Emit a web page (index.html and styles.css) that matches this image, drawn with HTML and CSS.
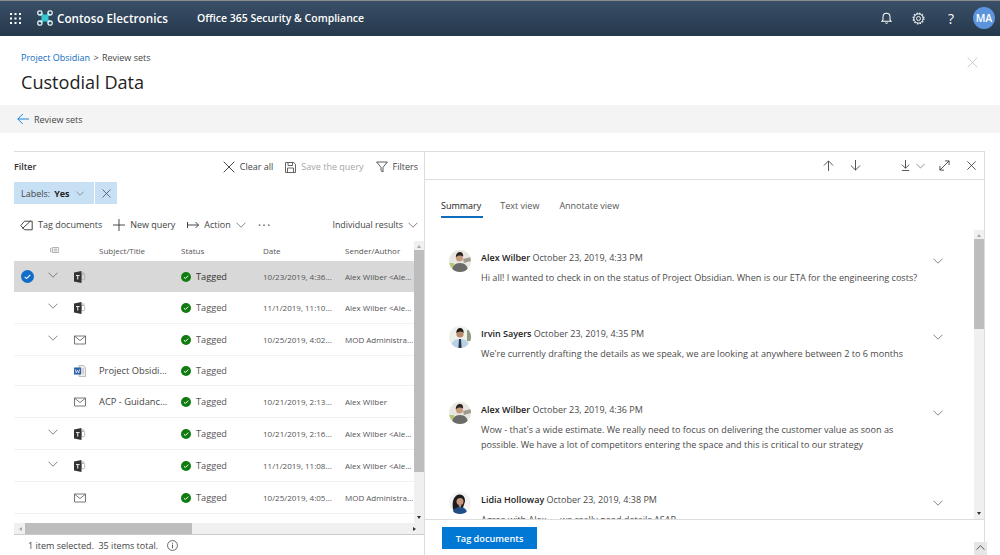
FILE: index.html
```html
<!DOCTYPE html>
<html lang="en">
<head>
  <meta charset="UTF-8">
  <title>Custodial Data</title>
  <link rel="stylesheet" href="styles.css">
</head>
<body>
  <svg class="sprites" width="0" height="0">
    <defs>
      <symbol id="i-chev" viewBox="0 0 10 6"><path d="M.5.7 5 5.2 9.5.7" fill="none" stroke="currentColor" stroke-width=".8"/></symbol>
      <symbol id="i-x" viewBox="0 0 12 12"><path d="M.7.7l10.6 10.6M11.3.7.7 11.3" fill="none" stroke="currentColor" stroke-width="1"/></symbol>
      <symbol id="i-teams" viewBox="0 0 12 12">
        <path d="M7.5 3.5h2.2a1 1 0 0 1 1 1v3.2a1 1 0 0 1-1 1H7.5z" fill="none" stroke="#a8a8a8" stroke-width=".8"/>
        <circle cx="9" cy="2.6" r="1" fill="none" stroke="#a8a8a8" stroke-width=".7"/>
        <path d="M0 1.6 7.5 0v12L0 10.4z" fill="#333"/>
        <path d="M2 4h3.6v1H4.3v3.6H3.2V5H2z" fill="#e8e8e8"/>
      </symbol>
      <symbol id="i-mail" viewBox="0 0 12 10"><path d="M.5 1h11v8H.5zM.7 1.2 6 5.6l5.300-4.400" fill="none" stroke="#555" stroke-width=".8"/></symbol>
      <symbol id="i-word" viewBox="0 0 12 12">
        <path d="M5 .5h4.500l2 2v9H5z" fill="#ececec" stroke="#a6a6a6" stroke-width=".7"/>
        <path d="M7 4h3M7 6h3M7 8h3" stroke="#a6a6a6" stroke-width=".7"/>
        <rect y="2.5" width="7" height="7" fill="#2b5fa8"/>
        <path d="M1.2 4.2 2.3 8l1.2-2.8L4.7 8l1-3.8" fill="none" stroke="#fff" stroke-width=".7"/>
      </symbol>
      <symbol id="i-ok" viewBox="0 0 11 11"><circle cx="5.5" cy="5.5" r="5.5" fill="#107c10"/><path d="M3.2 5.7 4.8 7.200 7.900 4" fill="none" stroke="#fff" stroke-width="1.100"/></symbol>
      <clipPath id="round"><circle cx="11" cy="11" r="11"/></clipPath>
      <symbol id="a-alex" viewBox="0 0 22 22">
        <g clip-path="url(#round)">
          <rect width="22" height="22" fill="#e8e8e0"/>
          <rect y="13" width="5" height="9" fill="#b9c47c"/>
          <path d="M14 9l8-2v4l-7 2z" fill="#a09a8c"/>
          <path d="M3 22c0-6 3-9 8-9s8 3 8 9z" fill="#6a6a68"/>
          <circle cx="10.5" cy="8" r="3.5" fill="#c99b7e"/>
          <path d="M6.800 7.500c0-4 1.800-5.500 4.200-5.500s3.400 2 3.100 4.500C12 5 9 5 6.800 7.500z" fill="#2c241f"/>
        </g>
      </symbol>
      <symbol id="a-irvin" viewBox="0 0 22 22">
        <g clip-path="url(#round)">
          <rect width="22" height="22" fill="#eef0ea"/>
          <rect x="18" y="4" width="4" height="11" fill="#8e9a80"/>
          <path d="M2 22c0-6 3-9 9-9s9 3 9 9z" fill="#b7d2e6"/>
          <circle cx="11" cy="8" r="3.600" fill="#b98a6c"/>
          <path d="M7.300 7c0-3.500 1.800-5 3.800-5s3.700 1.500 3.600 5c-2-2-5-2-7.400 0z" fill="#1f1a18"/>
          <path d="M10 13h2l.6 9H9.400z" fill="#2a3344"/>
        </g>
      </symbol>
      <symbol id="a-lidia" viewBox="0 0 22 22">
        <g clip-path="url(#round)">
          <rect width="22" height="22" fill="#f2f2f0"/>
          <path d="M5 20C2.500 14 3 4 10 2.500c5-.5 6 4 6 7l-3 9z" fill="#1c1a1c"/>
          <path d="M4 22c0-5 3-7 7-7s7 2 7 7z" fill="#1f4e86"/>
          <circle cx="11" cy="9.500" r="3.500" fill="#c9977c"/>
          <path d="M9.500 13h3l-1.500 3z" fill="#c9977c"/>
        </g>
      </symbol>
    </defs>
  </svg>

  <header class="topbar">
    <svg class="waffle" viewBox="0 0 11 11" width="11" height="11">
      <g fill="#fff">
        <rect width="2" height="2"/><rect x="4.5" width="2" height="2"/><rect x="9" width="2" height="2"/>
        <rect y="4.5" width="2" height="2"/><rect x="4.5" y="4.5" width="2" height="2"/><rect x="9" y="4.5" width="2" height="2"/>
        <rect y="9" width="2" height="2"/><rect x="4.5" y="9" width="2" height="2"/><rect x="9" y="9" width="2" height="2"/>
      </g>
    </svg>
    <svg class="logo" viewBox="0 0 16 16" width="16" height="16">
      <path d="M4 8 8 4l4 4-4 4z" fill="#39c6cf"/>
      <path d="M3.500 3.500l9 9M12.500 3.500l-9 9" stroke="#39c6cf" stroke-width="3"/>
      <g fill="none" stroke="#e8f6f7" stroke-width="1.300">
        <rect x=".8" y=".8" width="4.200" height="4.200" rx="1.800"/><rect x="11" y=".8" width="4.200" height="4.200" rx="1.800"/>
        <rect x=".8" y="11" width="4.200" height="4.200" rx="1.800"/><rect x="11" y="11" width="4.200" height="4.200" rx="1.800"/>
      </g>
    </svg>
    <span class="brand">Contoso Electronics</span>
    <span class="product">Office 365 Security &amp; Compliance</span>
    <div class="top-actions">
      <svg viewBox="0 0 12 13" width="11" height="12"><path d="M1 10h10L9.800 8.500V5a3.800 3.800 0 0 0-7.600 0v3.500zM4.800 11.500a1.300 1.300 0 0 0 2.400 0" fill="none" stroke="#fff" stroke-width="1.100"/></svg>
      <svg viewBox="0 0 13 13" width="13" height="13"><circle cx="6.5" cy="6.5" r="2" fill="none" stroke="#fff" stroke-width=".9"/><circle cx="6.5" cy="6.5" r="4.600" fill="none" stroke="#fff" stroke-width="1"/><circle cx="6.5" cy="6.5" r="5.400" fill="none" stroke="#fff" stroke-width="1.200" stroke-dasharray="1.400 1.430"/></svg>
      <span class="help">?</span>
      <span class="me">MA</span>
    </div>
  </header>

  <section class="title-block">
    <div>
      <div class="crumbs"><a>Project Obsidian</a> <i>&gt;</i> Review sets</div>
      <h1>Custodial Data</h1>
    </div>
    <svg class="title-close"><use href="#i-x"/></svg>
  </section>

  <div class="backbar">
    <svg viewBox="0 0 12 12" width="12" height="12"><path d="M12 6H.8M5.800 1 .8 6l5 5" fill="none" stroke="#0078d4" stroke-width=".9"/></svg>
    <span>Review sets</span>
  </div>

  <main class="panels">
    <section class="left">
      <div class="filter-head">
        <strong>Filter</strong>
        <div class="filter-actions">
          <span class="act"><svg class="ic-lg"><use href="#i-x"/></svg>Clear all</span>
          <span class="act off"><svg viewBox="0 0 11 11" width="11" height="11"><path d="M.5.5h8.300l1.700 1.700v8.300H.5zM3 .5v3h4.500v-3M2.500 10.500v-4.500h6v4.500" fill="none" stroke="#555" stroke-width=".9"/></svg>Save the query</span>
          <span class="act"><svg viewBox="0 0 12 12" width="12" height="12"><path d="M.6 1h10.800L7 6.300v4.700L5 9.600V6.300z" fill="none" stroke="#333" stroke-width=".8"/></svg>Filters</span>
        </div>
      </div>

      <div class="chip">
        <span class="chip-main">Labels: <b>Yes</b> <svg class="chev"><use href="#i-chev"/></svg></span>
        <span class="chip-x"><svg><use href="#i-x"/></svg></span>
      </div>

      <div class="toolbar">
        <span class="act"><svg viewBox="0 0 13 11" width="13" height="11"><path d="M.8 5.500 4.500 1.200h7.700v8.600H4.500zM2.500 8.500 10.500 1" fill="none" stroke="#333" stroke-width=".9"/></svg>Tag documents</span>
        <span class="act new-query"><svg viewBox="0 0 12 12" width="12" height="12"><path d="M6 0v12M0 6h12" stroke="#333" stroke-width=".9"/></svg>New query</span>
        <span class="act"><svg viewBox="0 0 12 8" width="12" height="8"><path d="M.5 1v6M.5 4h11M8.500 1l3 3-3 3" fill="none" stroke="#333" stroke-width=".9"/></svg>Action <svg class="chev"><use href="#i-chev"/></svg></span>
        <span class="dots">&middot;&middot;&middot;</span>
        <span class="act results">Individual results <svg class="chev"><use href="#i-chev"/></svg></span>
      </div>

      <div class="list-wrap">
        <div class="list">
          <div class="row head">
            <span></span>
            <span class="type-h"><svg viewBox="0 0 10 7" width="9" height="6"><path d="M2.500.5h7v6h-7zM4 2.500h4M4 4.500h4M.5 1v5" fill="none" stroke="#777" stroke-width=".7"/></svg></span>
            <span></span>
            <span>Subject/Title</span><span>Status</span><span>Date</span><span>Sender/Author</span>
          </div>

          <div class="row selected">
            <span class="check"><svg viewBox="0 0 13 13" width="13" height="13"><circle cx="6.5" cy="6.5" r="6.5" fill="#0f6cc9"/><path d="M3.700 6.800 5.600 8.600 9.300 4.800" fill="none" stroke="#fff" stroke-width="1.100"/></svg></span>
            <svg class="chev"><use href="#i-chev"/></svg>
            <svg class="type"><use href="#i-teams"/></svg>
            <span></span>
            <span class="status"><svg class="ok"><use href="#i-ok"/></svg>Tagged</span>
            <span class="sm">10/23/2019, 4:36...</span><span class="sm">Alex Wilber &lt;Ale...</span>
          </div>
          <div class="row">
            <span></span><svg class="chev"><use href="#i-chev"/></svg>
            <svg class="type"><use href="#i-teams"/></svg>
            <span></span>
            <span class="status"><svg class="ok"><use href="#i-ok"/></svg>Tagged</span>
            <span class="sm">11/1/2019, 11:10...</span><span class="sm">Alex Wilber &lt;Ale...</span>
          </div>
          <div class="row">
            <span></span><svg class="chev"><use href="#i-chev"/></svg>
            <svg class="type mail"><use href="#i-mail"/></svg>
            <span></span>
            <span class="status"><svg class="ok"><use href="#i-ok"/></svg>Tagged</span>
            <span class="sm">10/25/2019, 4:02...</span><span class="sm">MOD Administra...</span>
          </div>
          <div class="row short">
            <span></span><span></span>
            <svg class="type"><use href="#i-word"/></svg>
            <span class="subj">Project Obsidi...</span>
            <span class="status"><svg class="ok"><use href="#i-ok"/></svg>Tagged</span>
            <span></span><span></span>
          </div>
          <div class="row">
            <span></span><span></span>
            <svg class="type mail"><use href="#i-mail"/></svg>
            <span class="subj">ACP - Guidanc...</span>
            <span class="status"><svg class="ok"><use href="#i-ok"/></svg>Tagged</span>
            <span class="sm">10/21/2019, 2:13...</span><span class="sm">Alex Wilber</span>
          </div>
          <div class="row">
            <span></span><svg class="chev"><use href="#i-chev"/></svg>
            <svg class="type"><use href="#i-teams"/></svg>
            <span></span>
            <span class="status"><svg class="ok"><use href="#i-ok"/></svg>Tagged</span>
            <span class="sm">10/21/2019, 2:16...</span><span class="sm">Alex Wilber &lt;Ale...</span>
          </div>
          <div class="row">
            <span></span><svg class="chev"><use href="#i-chev"/></svg>
            <svg class="type"><use href="#i-teams"/></svg>
            <span></span>
            <span class="status"><svg class="ok"><use href="#i-ok"/></svg>Tagged</span>
            <span class="sm">11/1/2019, 11:08...</span><span class="sm">Alex Wilber &lt;Ale...</span>
          </div>
          <div class="row">
            <span></span><span></span>
            <svg class="type mail"><use href="#i-mail"/></svg>
            <span></span>
            <span class="status"><svg class="ok"><use href="#i-ok"/></svg>Tagged</span>
            <span class="sm">10/25/2019, 4:05...</span><span class="sm">MOD Administra...</span>
          </div>
        </div>
        <div class="vscroll list-scroll"><i class="up"></i><b></b><i class="down"></i></div>
      </div>

      <div class="hscroll"><i class="lt"></i><b></b><i class="rt"></i></div>
      <div class="status-line">1 item selected.&nbsp; 35 items total.
        <svg viewBox="0 0 12 12" width="11" height="11"><circle cx="6" cy="6" r="5.400" fill="none" stroke="#333" stroke-width=".8"/><path d="M6 5v4M6 3v1" stroke="#333" stroke-width=".9"/></svg>
      </div>
    </section>

    <section class="right">
      <div class="nav-bar">
        <svg class="nav" viewBox="0 0 12 12"><path d="M6 12V1M1 6l5-5 5 5" fill="none" stroke="#333" stroke-width=".9"/></svg>
        <svg class="nav" viewBox="0 0 12 12"><path d="M6 0v11M1 6l5 5 5-5" fill="none" stroke="#333" stroke-width=".9"/></svg>
        <svg class="nav dl" viewBox="0 0 12 12"><path d="M6 0v9M2 5l4 4 4-4M2 11.500h8" fill="none" stroke="#333" stroke-width=".9"/></svg>
        <svg class="chev"><use href="#i-chev"/></svg>
        <svg class="nav" viewBox="0 0 12 12"><path d="M1 11 11 1M6.500 1H11v4.500M1 6.500V11h4.500" fill="none" stroke="#333" stroke-width=".9"/></svg>
        <svg class="nav" viewBox="0 0 12 12"><path d="M1.500 1.500l9 9M10.500 1.500l-9 9" fill="none" stroke="#333" stroke-width=".9"/></svg>
      </div>

      <nav class="tabs">
        <a class="on">Summary</a><a>Text view</a><a class="last">Annotate view</a>
      </nav>

      <div class="thread-wrap">
        <div class="thread">
          <article class="msg msg-1">
            <svg class="avatar"><use href="#a-alex"/></svg>
            <div class="body">
              <p class="who"><b>Alex Wilber</b> October 23, 2019, 4:33 PM</p>
              <p>Hi all! I wanted to check in on the status of Project Obsidian. When is our ETA for the engineering costs?</p>
            </div>
            <svg class="chev"><use href="#i-chev"/></svg>
          </article>
          <article class="msg msg-2">
            <svg class="avatar"><use href="#a-irvin"/></svg>
            <div class="body">
              <p class="who"><b>Irvin Sayers</b> October 23, 2019, 4:35 PM</p>
              <p>We're currently drafting the details as we speak, we are looking at anywhere between 2 to 6 months</p>
            </div>
            <svg class="chev"><use href="#i-chev"/></svg>
          </article>
          <article class="msg msg-3">
            <svg class="avatar"><use href="#a-alex"/></svg>
            <div class="body">
              <p class="who"><b>Alex Wilber</b> October 23, 2019, 4:36 PM</p>
              <p>Wow - that's a wide estimate. We really need to focus on delivering the customer value as soon as possible. We have a lot of competitors entering the space and this is critical to our strategy</p>
            </div>
            <svg class="chev"><use href="#i-chev"/></svg>
          </article>
          <article class="msg">
            <svg class="avatar"><use href="#a-lidia"/></svg>
            <div class="body">
              <p class="who"><b>Lidia Holloway</b> October 23, 2019, 4:38 PM</p>
              <p>Agree with Alex &mdash; we really need details ASAP</p>
            </div>
            <svg class="chev"><use href="#i-chev"/></svg>
          </article>
        </div>
        <div class="vscroll thread-scroll"><i class="up"></i><b></b><i class="down"></i></div>
      </div>

      <div class="footer-bar">
        <button class="primary">Tag documents</button>
      </div>
    </section>
  </main>

  <div class="corner"><svg viewBox="0 0 10 6"><path d="M.5 5.300 5 .8l4.500 4.500" fill="none" stroke="#333" stroke-width=".9"/></svg></div>
</body>
</html>
```

FILE: styles.css
```css
* {
  box-sizing: border-box;
}

html, body {
  height: 100%;
}

body {
  margin: 0;
  height: 555px;
  overflow: hidden;
  display: flex;
  flex-direction: column;
  font-family: "Open Sans", "Noto Sans", Arial, sans-serif;
  font-size: 9px;
  color: #333;
  background-color: #fff;
}

svg {
  display: block;
  flex: none;
}

p {
  margin: 0;
}

.sprites {
  position: absolute;
}

/* Top bar */
.topbar {
  height: 36px;
  flex: none;
  display: flex;
  align-items: center;
  padding: 0 0 1px 10px;
  color: #fff;
  border-top: 1px solid #8b8f92;
  background: linear-gradient(#3a5068, #25384b);
}

.logo {
  margin-left: 16px;
}

.brand {
  margin-left: 4px;
  font-size: 11.7px;
  font-weight: 600;
}

.product {
  margin-left: 29px;
  font-size: 10.5px;
  font-weight: 600;
}

.top-actions {
  margin-left: auto;
  display: flex;
  align-items: center;
}

.top-actions svg {
  margin-right: 20px;
}

.help {
  font-size: 14px;
  width: 12px;
  margin-right: 16px;
  text-align: center;
}

.me {
  width: 22px;
  height: 22px;
  margin-right: 5px;
  border-radius: 50%;
  background-color: #5b93dc;
  font-size: 10.5px;
  font-weight: 600;
  line-height: 22px;
  text-align: center;
}

/* Title */
.title-block {
  height: 69px;
  flex: none;
  display: flex;
  justify-content: space-between;
  padding: 15px 22px 0 21px;
}

.crumbs {
  font-size: 9px;
  line-height: 13px;
  color: #444;
}

.crumbs a {
  color: #0f6cbd;
}

.crumbs i {
  font-style: normal;
  margin: 0 1px;
}

h1 {
  margin: 5px 0 0;
  font-size: 18.1px;
  font-weight: 400;
  line-height: 26px;
  color: #222;
}

.title-close {
  width: 11px;
  height: 11px;
  margin-top: 6px;
  color: #c8c8c8;
}

.backbar {
  height: 28px;
  flex: none;
  display: flex;
  align-items: center;
  gap: 5px;
  padding-left: 17px;
  background-color: #f4f4f4;
  font-size: 9px;
  color: #444;
}

/* Panels */
.panels {
  flex: 1;
  min-height: 0;
  display: flex;
  margin: 18px 15px 0 14px;
  border-top: 1px solid #ddd;
}

.left {
  width: 411px;
  flex: none;
  display: flex;
  flex-direction: column;
  border-right: 1px solid #ddd;
}

.filter-head {
  height: 30px;
  flex: none;
  display: flex;
  justify-content: space-between;
  padding: 9px 6px 0 0;
}

.filter-head strong {
  font-weight: 600;
  font-size: 9px;
  line-height: 14px;
  margin-top: -1px;
}

.filter-actions {
  display: flex;
  align-items: flex-start;
  gap: 12px;
}

.act {
  display: inline-flex;
  align-items: center;
  gap: 5px;
  font-size: 9px;
  line-height: 12px;
  color: #444;
  white-space: nowrap;
}

.act.off {
  color: #a6a6a6;
}

.ic-lg {
  width: 12px;
  height: 12px;
}

.chev {
  width: 10px;
  height: 6px;
  color: #666;
}

.chip {
  display: flex;
  gap: 1px;
  height: 22px;
  flex: none;
  font-size: 9px;
}

.chip-main {
  width: 80px;
  display: flex;
  align-items: center;
  gap: 4px;
  padding-left: 7px;
  background-color: #c7e0f4;
  color: #444;
}

.chip-main b {
  font-weight: 700;
  color: #222;
  margin-right: 2px;
}

.chip-main .chev {
  width: 8px;
  height: 5px;
}

.chip-x {
  width: 22px;
  display: flex;
  align-items: center;
  justify-content: center;
  background-color: #c7e0f4;
}

.chip-x svg {
  width: 9px;
  height: 9px;
  color: #444;
}

.toolbar {
  height: 37px;
  flex: none;
  display: flex;
  align-items: center;
  gap: 12px;
  padding: 5px 6px 0 6px;
}

.new-query {
  margin-left: -1px;
  letter-spacing: -.05px;
}

.dots {
  font-size: 13px;
  letter-spacing: 1.2px;
  color: #666;
}

.results {
  margin-left: auto;
  font-size: 8.9px;
}

/* Results list */
.list-wrap {
  height: 282px;
  flex: none;
  display: flex;
}

.list {
  flex: 1;
  min-width: 0;
}

.row {
  height: 32px;
  display: grid;
  grid-template-columns: 26px 26px 33px 82px 82px 82px 68px;
  align-items: center;
  border-bottom: 1px solid #f2f2f2;
  font-size: 9px;
  white-space: nowrap;
  overflow: hidden;
}

.row.head {
  height: 20px;
  padding-bottom: 2px;
  border-bottom: none;
  font-size: 8px;
  color: #555;
}

.row.selected {
  height: 31px;
  background-color: #d8d8d8;
  border-bottom: none;
}

.row.short {
  height: 30px;
}

.row > .chev {
  margin-left: 8px;
  margin-top: -3px;
}

.check {
  padding-left: 7px;
}

.type-h {
  padding-left: 10px;
}

.type {
  width: 12px;
  height: 12px;
  margin-left: 8px;
}

.type.mail {
  height: 10px;
}

.subj {
  font-size: 9.3px;
  color: #444;
}

.status {
  display: flex;
  align-items: center;
  gap: 5px;
  font-size: 9.2px;
  color: #555;
}

.selected .status {
  color: #333;
}

.ok {
  width: 10px;
  height: 10px;
}

.sm {
  font-size: 8px;
  color: #555;
  overflow: hidden;
}

/* Scrollbars */
.vscroll {
  width: 10px;
  flex: none;
  display: flex;
  flex-direction: column;
  background-color: #f0f0f0;
}

.vscroll b {
  display: block;
  background-color: #bdbdbd;
}

.vscroll i {
  display: block;
  margin-left: auto;
  margin-right: auto;
  border-left: 2.5px solid transparent;
  border-right: 2.5px solid transparent;
}

.vscroll .up {
  margin-top: 4px;
  margin-bottom: 2px;
  border-bottom: 3px solid #a6a6a6;
}

.vscroll .down {
  margin-top: auto;
  margin-bottom: 4px;
  border-top: 3px solid #333;
}

.list-scroll b {
  height: 222px;
}

.thread-scroll b {
  height: 90px;
}

.hscroll {
  height: 11px;
  flex: none;
  display: flex;
  align-items: center;
  padding-right: 11px;
  background-color: #f0f0f0;
  box-shadow: 0 1px 0 #ccc;
}

.hscroll b {
  width: 167px;
  height: 11px;
  background-color: #bdbdbd;
}

.hscroll i {
  display: block;
  border-top: 2.5px solid transparent;
  border-bottom: 2.5px solid transparent;
}

.hscroll .lt {
  margin: 0 3px 0 5px;
  border-right: 3px solid #a6a6a6;
}

.hscroll .rt {
  margin-left: auto;
  margin-right: -3px;
  border-left: 3px solid #333;
}

.status-line {
  flex: 1;
  display: flex;
  align-items: center;
  gap: 9px;
  padding: 2px 0 0 14px;
  font-size: 9px;
  color: #444;
}

/* Right panel */
.right {
  flex: 1;
  min-width: 0;
  display: flex;
  flex-direction: column;
  border-right: 1px solid #ddd;
}

.nav-bar {
  height: 28px;
  flex: none;
  display: flex;
  align-items: center;
  justify-content: flex-end;
  padding-right: 7px;
  border-bottom: 1px solid #ddd;
}

.nav {
  width: 11px;
  height: 11px;
  margin-left: 16px;
}

.nav.dl {
  margin-left: 39px;
}

.nav-bar .chev {
  margin-left: 5px;
  margin-right: -2px;
  width: 9px;
}

.tabs {
  height: 50px;
  flex: none;
  display: flex;
  gap: 19px;
  padding: 10px 0 0 16px;
}

.tabs a {
  height: 28px;
  padding-top: 9px;
  font-size: 9px;
  color: #555;
}

.tabs .on {
  color: #222;
  font-weight: 500;
  padding-right: 2px;
  margin-right: -2px;
  border-bottom: 2px solid #0f6cbd;
}

.tabs .last {
  margin-left: 1px;
}

.thread-wrap {
  height: 290px;
  flex: none;
  display: flex;
  overflow: hidden;
  border-bottom: 1px solid #ddd;
}

.thread {
  flex: 1;
  min-width: 0;
  overflow: hidden;
  padding: 20px 0 0 24px;
}

.msg {
  display: flex;
  align-items: flex-start;
  padding-right: 31px;
  font-size: 9.1px;
  line-height: 15px;
}

.msg-1, .msg-2 {
  height: 76px;
}

.msg-3 {
  height: 90px;
}

.avatar {
  width: 22px;
  height: 22px;
}

.body {
  flex: 1;
  min-width: 0;
  padding-left: 10px;
  color: #4a4a4a;
}

.who {
  margin-bottom: 5px;
  font-size: 9px;
}

.who b {
  font-weight: 600;
  color: #222;
}

.msg > .chev {
  margin-left: 9px;
  margin-top: 8px;
}

.footer-bar {
  flex: 1;
  padding: 7px 0 0 17px;
}

.primary {
  display: block;
  width: 95px;
  height: 22px;
  border: none;
  padding: 0;
  background-color: #0078d4;
  color: #fff;
  font-family: inherit;
  font-size: 9.2px;
  font-weight: 600;
}

.corner {
  position: absolute;
  right: 13px;
  bottom: 0;
  width: 13px;
  height: 13px;
  padding: 3px 2px;
  background-color: #e6e6e6;
}
```
